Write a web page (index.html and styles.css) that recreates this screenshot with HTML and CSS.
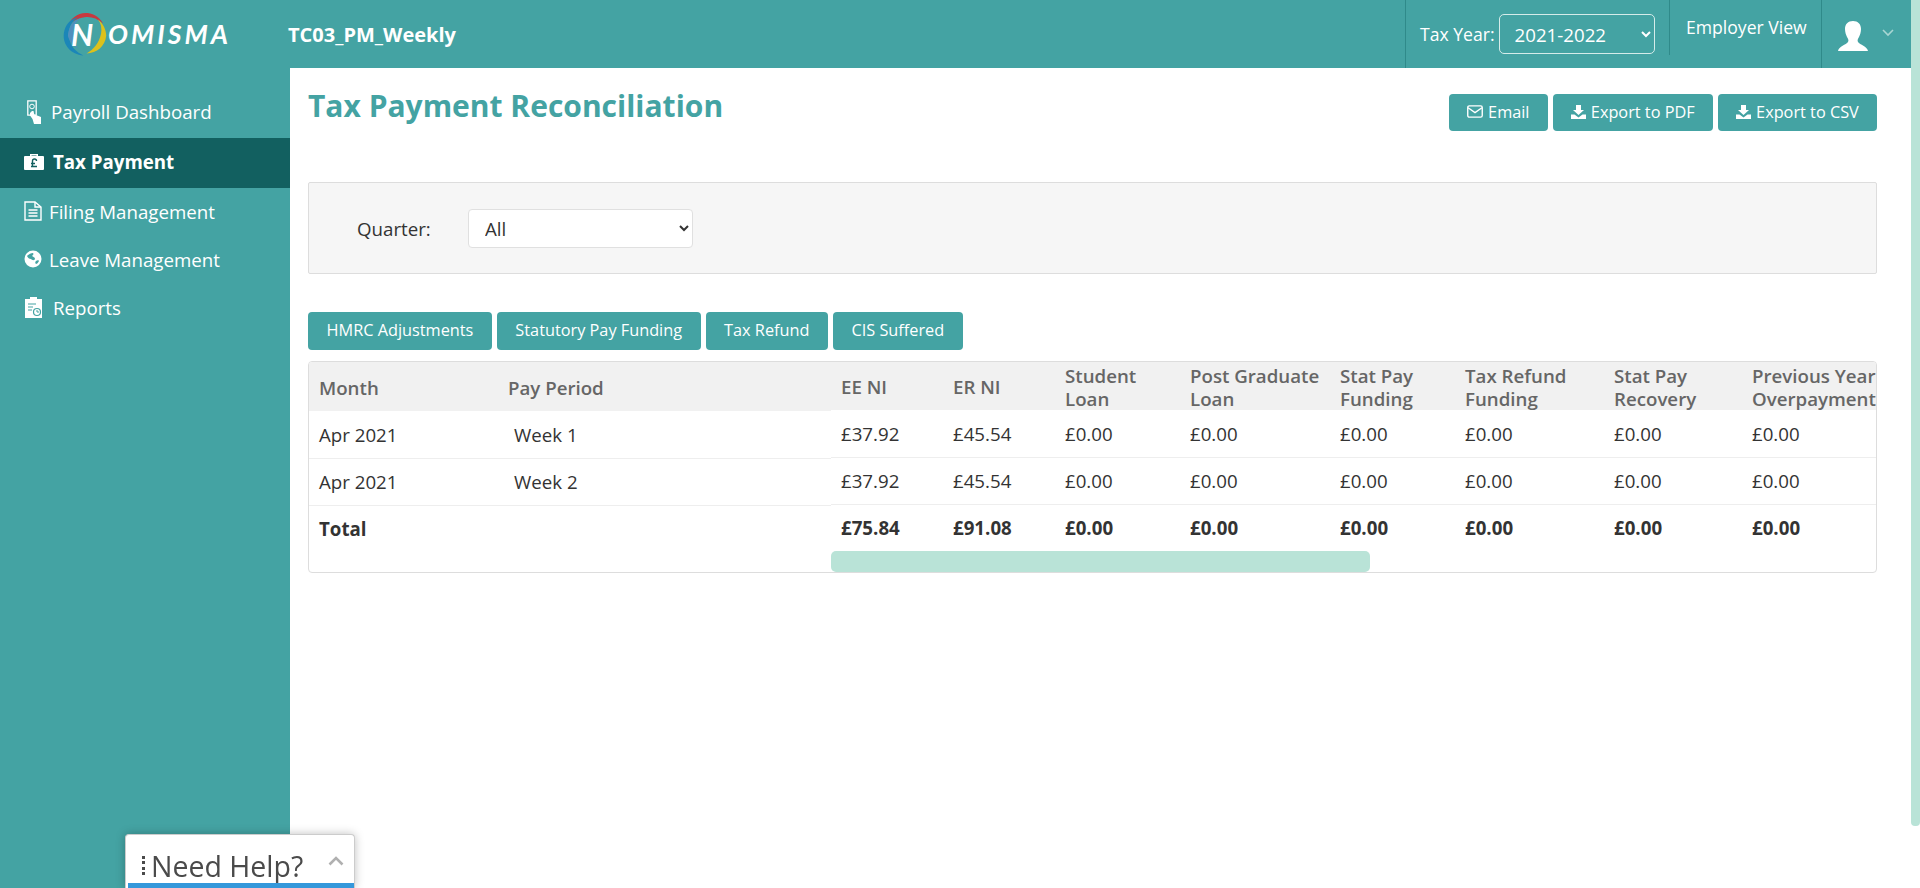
FILE: index.html
```html
<!DOCTYPE html>
<html>
<head>
<meta charset="utf-8"/>
<title>Tax Payment Reconciliation</title>
<link rel="stylesheet" href="styles.css">
</head>
<body>
<div class="page">
  <header class="topbar">
    <div class="logo">
      <svg class="logo-ring" width="46" height="44" viewBox="1 1 43 42.500">
        <path d="M5 17C8 6 17 1 25 2c7 1 12 5 15 10-6-5-12-7-18-6-7 1-13 4-17 11z" fill="#c8393f"/>
        <path d="M21 43C9 42 1 33 2 22 3 13 9 7 16 6 9 10 6 17 7 25c1 9 7 15 14 18z" fill="#1b86b8"/>
        <path d="M8 16c2-5 6-8 10-9-5 4-7 9-7 15s2 12 6 15c-6-3-10-8-11-13 0-3 1-6 2-8z" fill="#4f8fbd"/>
        <path d="M24 41c10 0 18-7 19-17 0-6-3-12-8-16 3 4 4 9 3 14-2 9-7 15-14 19z" fill="#dcc11c"/>
      </svg>
      <span class="logo-n">N</span><span class="logo-text">OMISMA</span>
    </div>
    <div class="company">TC03_PM_Weekly</div>
    <div class="top-right">
      <div class="top-cell tax-year">
        <label>Tax Year:</label>
        <select class="year-select"><option>2021-2022</option></select>
      </div>
      <div class="top-cell employer">Employer View</div>
      <div class="top-cell user">
        <svg width="30" height="32" viewBox="0 0 30 32"><path d="M15 1c5 0 8 3 8 8 0 3-1 6-2 8-1 2-2 3-1 5 2 3 9 4 10 9H0c1-5 8-6 10-9 1-2 0-3-1-5-1-2-2-5-2-8 0-5 3-8 8-8z" fill="#fff"/></svg>
        <svg class="user-arrow" width="12" height="8" viewBox="0 0 12 8"><path d="M1 1l5 5 5-5" fill="none" stroke="#a9d6d3" stroke-width="1.6"/></svg>
      </div>
    </div>
  </header>

  <div class="body-row">
    <nav class="sidebar">
      <a class="nav-item nav-pay">
        <svg width="14" height="24" viewBox="0 0 14 24"><path d="M.8.800h8.400v14.400H.8z" fill="none" stroke="#fff" stroke-width="1.300"/><circle cx="5" cy="6.500" r="2.300" fill="none" stroke="#fff"/><path d="M3 13l2-2 1.500 0 .8 3.500 4.200 1.500 2.500 1v7H7l-1.500-5-2.500-3.500z" fill="#fff"/></svg>
        Payroll Dashboard
      </a>
      <a class="nav-item active nav-tax">
        <svg width="20" height="17" viewBox="0 0 20 17"><path d="M6 3V1h8v2h5a1 1 0 0 1 1 1v12a1 1 0 0 1-1 1H1a1 1 0 0 1-1-1V4a1 1 0 0 1 1-1zm1.500 0h5V2.400h-5z" fill="#fff" fill-rule="evenodd"/><path d="M12.500 8a2 2 0 0 0-4 0v5m-1.500-2.500h4m-4 3h6" fill="none" stroke="#126060" stroke-width="1.400"/></svg>
        Tax Payment
      </a>
      <a class="nav-item nav-file">
        <svg width="18" height="20" viewBox="0 0 18 20"><path d="M1 1h10l6 5v13H1z" fill="none" stroke="#fff" stroke-width="1.400"/><path d="M11 1v5h6M4.500 9h9M4.500 12h9M4.500 15h9" fill="none" stroke="#fff" stroke-width="1.400"/></svg>
        Filing Management
      </a>
      <a class="nav-item nav-leave">
        <svg width="18" height="18" viewBox="0 0 18 18"><circle cx="9" cy="9" r="8.500" fill="#fff"/><path d="M3 6c2-2 4-3 6-3 1 1 0 2-1 3 1 1 3 1 3 3-1 2-3 1-4 0-2 0-3-1-4-3zm9 5c1-1 3-1 3 0-1 2-2 3-3 3-1-1-1-2 0-3z" fill="#44a3a3"/></svg>
        Leave Management
      </a>
      <a class="nav-item nav-rep">
        <svg width="17" height="22" viewBox="0 0 17 22"><path d="M0 3h5V1h7v2h5v19H0z" fill="#fff"/><path d="M3 8h8M3 11h5M3 14h4" stroke="#44a3a3" stroke-width="1.200"/><circle cx="12" cy="16" r="3.500" fill="none" stroke="#44a3a3" stroke-width="1.200"/><path d="M12 14v2h2" fill="none" stroke="#44a3a3"/></svg>
        Reports
      </a>
    </nav>

    <main class="content">
      <div class="title-row">
        <h1>Tax Payment Reconciliation</h1>
        <div class="actions">
          <button class="btn">
            <svg width="16" height="13" viewBox="0 0 15 12"><rect x=".7" y=".7" width="13.600" height="10.600" rx="1.500" fill="none" stroke="#fff" stroke-width="1.300"/><path d="M1 2.500l6.500 4.500L14 2.500" fill="none" stroke="#fff" stroke-width="1.300"/></svg>
            Email
          </button>
          <button class="btn">
            <svg width="15" height="14" viewBox="0 0 15 14"><path d="M5 0h5v5h3L7.500 10 2 5h3zM0 9.500h3.500l4 3 4-3H15V14H0z" fill="#fff"/></svg>
            Export to PDF
          </button>
          <button class="btn">
            <svg width="15" height="14" viewBox="0 0 15 14"><path d="M5 0h5v5h3L7.500 10 2 5h3zM0 9.500h3.500l4 3 4-3H15V14H0z" fill="#fff"/></svg>
            Export to CSV
          </button>
        </div>
      </div>

      <div class="filter-panel">
        <label>Quarter:</label>
        <select class="quarter-select"><option>All</option></select>
      </div>

      <div class="tabs">
        <button class="btn tab">HMRC Adjustments</button>
        <button class="btn tab">Statutory Pay Funding</button>
        <button class="btn tab">Tax Refund</button>
        <button class="btn tab">CIS Suffered</button>
      </div>

      <div class="grid-panel">
        <table class="grid grid-frozen">
          <colgroup><col class="c-month"><col class="c-period"></colgroup>
          <thead><tr><th>Month</th><th>Pay Period</th></tr></thead>
          <tbody>
            <tr><td>Apr 2021</td><td class="week">Week 1</td></tr>
            <tr><td>Apr 2021</td><td class="week">Week 2</td></tr>
            <tr class="total"><td>Total</td><td></td></tr>
          </tbody>
        </table>
        <div class="grid-scroll">
          <div class="grid-clip">
            <table class="grid grid-moving">
              <colgroup>
                <col style="width:112px"><col style="width:112px"><col style="width:125px"><col style="width:150px">
                <col style="width:125px"><col style="width:149px"><col style="width:138px"><col style="width:150px">
              </colgroup>
              <thead>
                <tr><th>EE NI</th><th>ER NI</th><th>Student<br>Loan</th><th>Post Graduate<br>Loan</th><th>Stat Pay<br>Funding</th><th>Tax Refund<br>Funding</th><th>Stat Pay<br>Recovery</th><th>Previous Year<br>Overpayment</th></tr>
              </thead>
              <tbody>
                <tr><td>£37.92</td><td>£45.54</td><td>£0.00</td><td>£0.00</td><td>£0.00</td><td>£0.00</td><td>£0.00</td><td>£0.00</td></tr>
                <tr><td>£37.92</td><td>£45.54</td><td>£0.00</td><td>£0.00</td><td>£0.00</td><td>£0.00</td><td>£0.00</td><td>£0.00</td></tr>
                <tr class="total"><td>£75.84</td><td>£91.08</td><td>£0.00</td><td>£0.00</td><td>£0.00</td><td>£0.00</td><td>£0.00</td><td>£0.00</td></tr>
              </tbody>
            </table>
          </div>
          <div class="grid-thumb"></div>
        </div>
      </div>
    </main>
  </div>
</div>
<div class="page-scroll"><div class="page-thumb"></div></div>

<div class="help">
  <span class="help-dots"></span><span class="help-text">Need Help?</span>
  <svg class="help-arrow" width="16" height="10" viewBox="0 0 16 10"><path d="M1.500 8.500L8 2l6.500 6.500" fill="none" stroke="#b0b0b0" stroke-width="2.600"/></svg>
</div>
</body>
</html>
```

FILE: styles.css
```css
html, body {
  height: 100%;
}
body {
  margin: 0;
  display: flex;
  height: 888px;
  overflow: hidden;
  font-family: "Open Sans", sans-serif;
  font-size: 18.7px;
  color: #333;
  background: #fff;
  --teal: #44a3a3;
}
.page {
  flex: 1;
  min-width: 0;
  display: flex;
  flex-direction: column;
}
.page-scroll {
  width: 9px;
}
.page-thumb {
  height: 826px;
  background: #b9e3d7;
  border-radius: 0 0 4px 4px;
}

/* top bar */
.topbar {
  height: 68px;
  background: var(--teal);
  color: #fff;
  display: flex;
  align-items: center;
}
.logo {
  width: 288px;
  padding-left: 62px;
  box-sizing: border-box;
  display: flex;
  align-items: center;
  position: relative;
  font-family: "Lato", sans-serif;
  font-style: italic;
  font-weight: 700;
  color: #fff;
}
.logo-ring {
  position: absolute;
  left: 62px;
  top: -2px;
}
.logo-n {
  position: relative;
  font-size: 31px;
  line-height: 40px;
  margin-left: 9px;
  width: 37px;
}
.logo-text {
  position: relative;
  font-size: 26.5px;
  letter-spacing: 3px;
}
.company {
  font-weight: 700;
  font-size: 20px;
}
.top-right {
  margin-left: auto;
  display: flex;
  align-items: stretch;
  height: 68px;
}
.top-cell {
  border-left: 1px solid #2f8a8a;
  box-sizing: border-box;
}
.tax-year {
  width: 264px;
  padding-left: 14px;
  display: flex;
  align-items: center;
  gap: 4px;
  font-size: 17.6px;
}
.year-select {
  width: 156px;
  height: 40px;
  padding-left: 11px;
  font: 18.7px "Open Sans", sans-serif;
  color: #fff;
  background: transparent;
  border: 1px solid #d5ecea;
  border-radius: 5px;
}
.employer {
  width: 152px;
  padding: 15px 0 0 16px;
  font-size: 17.6px;
  border-left-color: #2f8a8a;
  height: 55px;
}
.user {
  width: 90px;
  padding: 20px 0 0 16px;
  display: flex;
  gap: 14px;
  align-items: flex-start;
}
.user-arrow {
  margin-top: 9px;
}

/* sidebar */
.body-row {
  flex: 1;
  display: flex;
  min-height: 0;
}
.sidebar {
  width: 290px;
  background: var(--teal);
  padding-top: 19px;
  box-sizing: border-box;
}
.nav-item {
  height: 48px;
  display: flex;
  align-items: center;
  color: #fff;
  font-size: 18.7px;
  padding-left: 24px;
  padding-bottom: 2px;
  box-sizing: border-box;
}
.nav-pay { height: 51px; gap: 10px; padding-left: 27px; }
.nav-tax { height: 50px; gap: 9px; padding-bottom: 3px; }
.nav-file { gap: 7px; }
.nav-leave { gap: 7px; }
.nav-rep { gap: 11px; padding-left: 25px; }
.active {
  background: #126060;
  font-weight: 700;
}

/* content */
.content {
  flex: 1;
  padding: 0 34px 0 18px;
  min-width: 0;
}
.title-row {
  display: flex;
  justify-content: space-between;
  height: 114px;
}
h1 {
  margin: 18px 0 0;
  font-size: 30px;
  line-height: 40px;
  font-weight: 700;
  color: var(--teal);
}
.actions {
  display: flex;
  gap: 5px;
  margin-top: 26px;
}
.btn {
  height: 37px;
  padding: 0 18.500px 2px;
  border: 0;
  border-radius: 4px;
  background: var(--teal);
  color: #fff;
  font: 16.3px "Open Sans", sans-serif;
  display: inline-flex;
  align-items: center;
  gap: 5px;
}
.actions .btn {
  padding: 0 18.200px 2px;
}
.filter-panel {
  height: 92px;
  box-sizing: border-box;
  border: 1px solid #ddd;
  border-radius: 2px;
  background: #f6f6f6;
  display: flex;
  align-items: center;
  padding-left: 48px;
}
.filter-panel label {
  width: 111px;
}
.quarter-select {
  width: 225px;
  height: 39px;
  padding-left: 12px;
  font: 18.7px "Open Sans", sans-serif;
  color: #333;
  background: #fff;
  border: 1px solid #e0e0e0;
  border-radius: 4px;
}
.tabs {
  display: flex;
  gap: 5px;
  margin-top: 38px;
}
.tab {
  height: 38px;
}

/* table */
.grid-panel {
  margin-top: 11px;
  height: 212px;
  box-sizing: border-box;
  border: 1px solid #ddd;
  border-radius: 4px;
  display: flex;
  overflow: hidden;
}
.grid {
  border-collapse: collapse;
  table-layout: fixed;
}
.grid th {
  height: 49px;
  padding: 2px 0 0 10px;
  box-sizing: border-box;
  background: #f1f1f1;
  color: #666;
  font-size: 18.7px;
  font-weight: 600;
  line-height: 23px;
  text-align: left;
  white-space: nowrap;
}
.grid td {
  height: 47px;
  padding: 0 0 0 10px;
  box-sizing: border-box;
  border-bottom: 1px solid #eee;
  font-size: 18.7px;
}
.grid .total td {
  border-bottom: 0;
  font-weight: 700;
}
.grid-frozen {
  width: 522px;
  flex: none;
  align-self: flex-start;
}
.c-month { width: 189px; }
.c-period { width: 333px; }
.grid td.week {
  padding-left: 16px;
}
.grid-scroll {
  flex: 1;
  min-width: 0;
}
.grid-clip {
  overflow: hidden;
  height: 189px;
}
.grid-moving {
  width: 1061px;
  margin-top: -1px;
}
.grid-thumb {
  width: 539px;
  height: 21px;
  background: #b9e3d7;
  border-radius: 5px;
}

/* help widget */
.help {
  position: fixed;
  left: 125px;
  top: 834px;
  width: 230px;
  height: 54px;
  box-sizing: border-box;
  background: #fff;
  border: 1px solid #ccc;
  border-bottom: 0;
  border-radius: 4px 4px 0 0;
  box-shadow: 0 0 10px rgba(0, 0, 0, .25);
  display: flex;
  align-items: center;
  padding: 8px 0 0 16px;
  color: #4a4a4a;
}
.help::after {
  content: "";
  position: absolute;
  left: 2px;
  right: 0;
  bottom: 0;
  height: 5px;
  background: #3498db;
}
.help-dots {
  height: 19px;
  border-left: 3px dotted #4a4a4a;
  margin-right: 6px;
}
.help-text {
  font-size: 28.5px;
  line-height: 36px;
}
.help-arrow {
  position: absolute;
  right: 10px;
  top: 21px;
}
```
